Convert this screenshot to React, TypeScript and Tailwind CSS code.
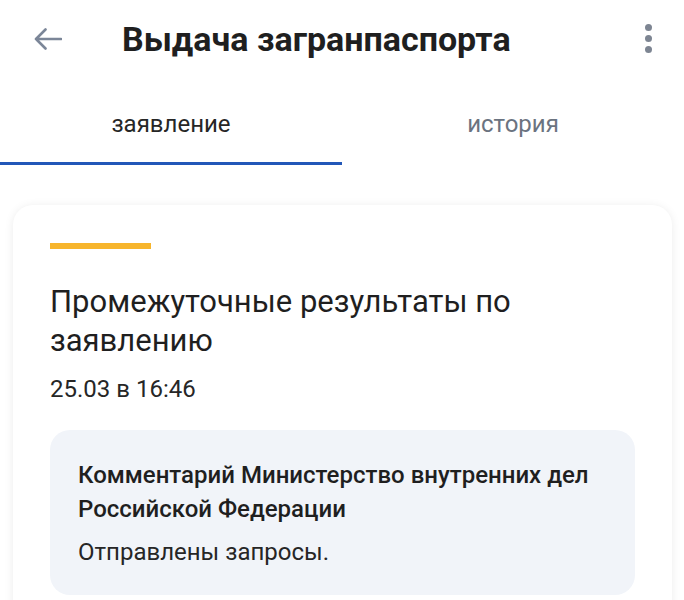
export default function App() {
  return (
    <div className="min-h-[600px] bg-white font-['Roboto',sans-serif] text-[#1f1f1f]">
      <header className="flex h-[77px] items-center pl-[34px] pr-[32px]">
        <svg width="28" height="22" viewBox="0 0 28 22" fill="none" className="shrink-0">
          <path
            d="M27 11H2M11.5 1.5L2 11l9.5 9.5"
            stroke="#7b8698"
            strokeWidth="2.6"
            strokeLinecap="round"
            strokeLinejoin="round"
          />
        </svg>
        <h1 className="ml-[60px] flex-1 text-[34px] font-bold leading-none">
          Выдача загранпаспорта
        </h1>
        <div className="flex flex-col gap-[4px]">
          <span className="h-[7px] w-[7px] rounded-full bg-[#7d8592]" />
          <span className="h-[7px] w-[7px] rounded-full bg-[#7d8592]" />
          <span className="h-[7px] w-[7px] rounded-full bg-[#7d8592]" />
        </div>
      </header>

      <nav className="flex">
        <div className="flex h-[88px] flex-1 flex-col">
          <span className="flex flex-1 items-center justify-center pt-[8px] text-[24px] text-[#262626]">
            заявление
          </span>
          <span className="h-[3px] bg-[#2257b8]" />
        </div>
        <div className="flex h-[88px] flex-1 flex-col">
          <span className="flex flex-1 items-center justify-center pt-[8px] text-[24px] text-[#6b7380]">
            история
          </span>
          <span className="h-[3px]" />
        </div>
      </nav>

      <section className="ml-[13px] mr-[12px] mt-[40px] rounded-[20px] bg-white px-[37px] pb-[30px] pt-[38px] shadow-[0_1px_10px_rgba(0,0,0,0.08)]">
        <div className="h-[6px] w-[101px] bg-[#f7b52c]" />
        <h2 className="mt-[33px] text-[31px] leading-[39px] text-[#1f1f1f]">
          Промежуточные результаты по
          <br />
          заявлению
        </h2>
        <p className="mt-[14px] text-[24px] leading-[30px] text-[#262626]">25.03 в 16:46</p>
        <div className="mt-[26px] rounded-[20px] bg-[#f1f4f9] px-[28px] pb-[28px] pt-[28px]">
          <p className="text-[24px] font-medium leading-[34px] text-[#1f1f1f]">
            Комментарий Министерство внутренних дел Российской Федерации
          </p>
          <p className="mt-[11px] text-[24px] leading-[30px] text-[#262626]">Отправлены запросы.</p>
        </div>
      </section>
    </div>
  );
}
